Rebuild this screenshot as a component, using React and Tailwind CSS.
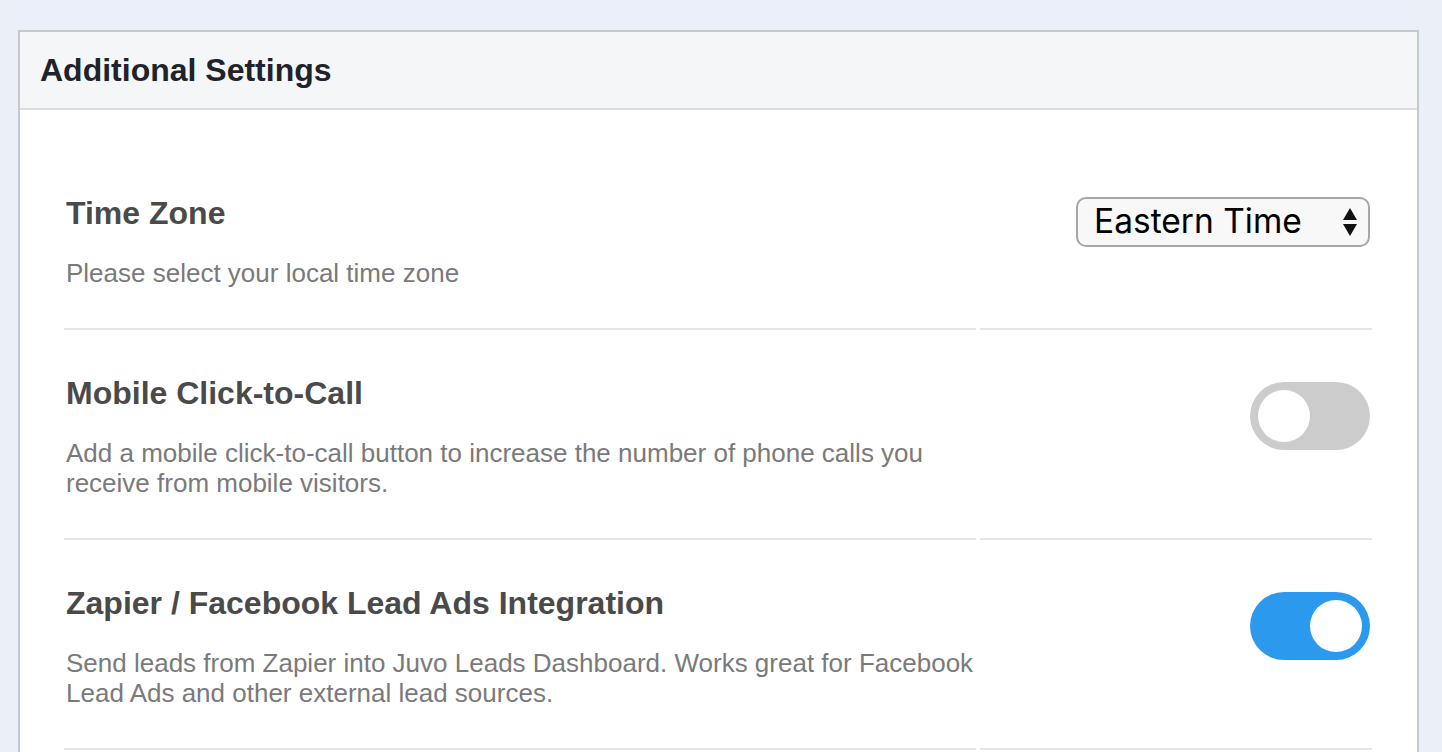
import React from 'react';

const settings = [
  {
    title: 'Time Zone',
    description: 'Please select your local time zone',
    control: 'select',
  },
  {
    title: 'Mobile Click-to-Call',
    description:
      'Add a mobile click-to-call button to increase the number of phone calls you receive from mobile visitors.',
    control: 'toggle',
    on: false,
  },
  {
    title: 'Zapier / Facebook Lead Ads Integration',
    description:
      'Send leads from Zapier into Juvo Leads Dashboard. Works great for Facebook Lead Ads and other external lead sources.',
    control: 'toggle',
    on: true,
  },
];

const TimeZoneSelect = () => (
  <div className="mt-[7px] flex h-[50px] w-[294px] items-center justify-between rounded-[10px] border-2 border-[#a6a6a6] bg-[#f8f8f8] pl-[16px] pr-[10px]">
    <span className="text-[33.5px] leading-none text-black" style={{ fontFamily: 'Inter, "Liberation Sans", sans-serif' }}>
      Eastern Time
    </span>
    <svg width="16" height="32" viewBox="0 0 16 32">
      <path d="M8 2 L15 14 L1 14 Z" fill="#111" />
      <path d="M1 18 L15 18 L8 30 Z" fill="#111" />
    </svg>
  </div>
);

const Toggle = ({ on }) => (
  <div
    className={`mt-[12px] flex h-[68px] w-[120px] items-center rounded-full px-[8px] ${
      on ? 'justify-end bg-[#2b99ee]' : 'justify-start bg-[#cccccc]'
    }`}
  >
    <div className="h-[52px] w-[52px] rounded-full bg-white" />
  </div>
);

const SettingRow = ({ item }) => (
  <div className="grid grid-cols-[912px_392px] gap-x-[4px]">
    <div className="border-b-2 border-[#e6e6e6] pb-[40px] pt-[44px] pl-[2px]">
      <h3 className="text-[32px] font-bold leading-[38px] text-[#4a4a4a]">{item.title}</h3>
      <p className="mt-[26px] pr-[2px] text-[26px] leading-[30px] text-[#7a7a7a]">{item.description}</p>
    </div>
    <div className="flex items-start justify-end border-b-2 border-[#e6e6e6] pr-[2px] pt-[40px]">
      {item.control === 'select' ? <TimeZoneSelect /> : <Toggle on={item.on} />}
    </div>
  </div>
);

export default function App() {
  return (
    <div
      className="min-h-screen bg-[#ebeff7] pl-[18px] pt-[30px]"
      style={{ fontFamily: '"Liberation Sans", Arial, sans-serif' }}
    >
      <div className="w-[1401px] border-2 border-[#c6c8ca] bg-white">
        <div className="flex h-[78px] items-center border-b-2 border-[#dcdcdc] bg-[#f5f6f8] px-[20px]">
          <h2 className="text-[32px] font-bold leading-none text-[#1f232a]">Additional Settings</h2>
        </div>
        <div className="px-[44px] pb-[60px] pt-[40px]">
          {settings.map((item) => (
            <SettingRow key={item.title} item={item} />
          ))}
        </div>
      </div>
    </div>
  );
}
